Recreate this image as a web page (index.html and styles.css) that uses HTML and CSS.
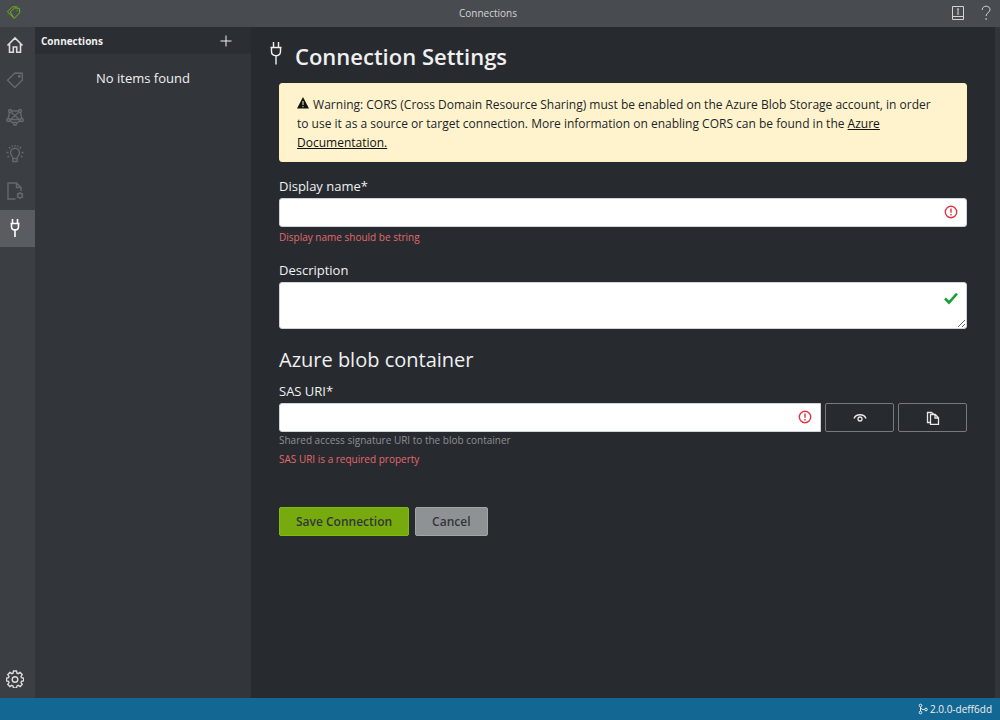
FILE: index.html
```html
<!DOCTYPE html>
<html lang="en">
<head>
    <meta charset="UTF-8">
    <title>Connections</title>
    <link rel="stylesheet" href="styles.css">
</head>
<body>
    <header class="titlebar">
        <svg class="logo" viewBox="0 0 16 16"><path d="M4.500 7.500L9 3.200l5.200.3.500 4.700-5.900 6.100z"/><path d="M8.500 14L1.500 7.300 7 1.800l5 .2"/><circle cx="12" cy="5.800" r=".3"/></svg>
        <h1 class="titlebar-title">Connections</h1>
        <div class="titlebar-tools">
            <button type="button" aria-label="Documentation">
                <svg viewBox="0 0 16 16"><path d="M2.500 1.500h11v13h-11zM2.500 11.500h11M8 4v4.500"/><path d="M7 4h2M7 9h2"/></svg>
            </button>
            <button type="button" aria-label="Help">
                <svg viewBox="0 0 16 16"><path d="M4.200 5C4.200 0 12 0 12 4.700c0 3-3.900 3-3.900 6.300M8.100 13v2"/></svg>
            </button>
        </div>
    </header>

    <div class="app">
        <nav class="sidebar">
            <a class="home" href="#" aria-label="Home">
                <svg viewBox="0 0 18 18"><path d="M1.500 9.500L9 2l7.500 7.500M3.500 8v8.300h3.800v-5.300h3.400v5.300h3.800V8"/></svg>
            </a>
            <a href="#" aria-label="Tags">
                <svg viewBox="0 0 18 18"><path d="M1.500 9.300L9 2l7.200.2.200 6.800-7.600 7.500z"/><circle cx="13.300" cy="5.200" r=".8"/></svg>
            </a>
            <a href="#" aria-label="Train">
                <svg viewBox="0 0 18 18"><path d="M4.500 3h9M3.600 4.300L2 11M14.400 4.300L16 11M3.500 12.700l4.200 2.400M14.500 12.700l-4.200 2.400M4.800 4l8.500 7.300M13.200 4l-8.500 7.300M3.500 11.500h11"/><circle cx="4" cy="3" r="1.500"/><circle cx="14" cy="3" r="1.500"/><circle cx="2.200" cy="12" r="1.500"/><circle cx="15.800" cy="12" r="1.500"/><circle cx="9" cy="15.700" r="1.500"/></svg>
            </a>
            <a href="#" aria-label="Analyze">
                <svg viewBox="0 0 18 18"><path d="M6.800 13c0-2-2.300-2.500-2.300-5.200a4.500 4.500 0 0 1 9 0c0 2.700-2.300 3.200-2.300 5.200v3.500H6.800zM6.800 13.500h4.400M9 0v1.600M3 2l1.300 1.400M15 2l-1.300 1.400M.5 7.500h2M15.500 7.500h2M1.500 12l1.700-.8M16.500 12l-1.700-.8M6 .6l.5 1.300M12 .6l-.5 1.300"/></svg>
            </a>
            <a href="#" aria-label="Project settings">
                <svg viewBox="0 0 18 18"><path d="M9.500 17H2V1h8.500L15 5.500V9M10.500 1v4.500H15"/><circle cx="14" cy="13.500" r="2.300"/><path d="M14 10v1.200M14 15.800V17M10.900 11.700l1.100.7M16 14.600l1.100.7M10.900 15.300l1.100-.7M16 12.400l1.100-.7"/></svg>
            </a>
            <a class="active" href="#" aria-label="Connections">
                <svg viewBox="0 0 18 18"><path d="M6.500 0v4.500M11.500 0v4.500M4.500 4.500h9M5.500 5v2.500C5.500 12 12.500 12 12.500 7.500V5M9 11v7"/></svg>
            </a>
            <a class="settings" href="#" aria-label="Settings">
                <svg viewBox="0 0 18 18"><path d="M7.500 1h3l.5 2.200 1.200.5 1.900-1.200 2.100 2.100-1.200 1.900.5 1.200 2.200.5v2.600l-2.200.6-.5 1.200 1.200 1.900-2.100 2.100-1.900-1.200-1.200.5-.5 2.100h-3L7 15.900l-1.200-.5-1.900 1.200-2.100-2.100L3 12.600l-.5-1.200-2-.6V8.200l2-.5L3 6.500 1.800 4.600l2.100-2.100 1.900 1.200L7 3.200z"/><circle cx="9" cy="9.500" r="2.800"/></svg>
            </a>
        </nav>

        <aside class="panel">
            <div class="panel-header">
                <h2>Connections</h2>
                <button type="button" aria-label="New connection">
                    <svg viewBox="0 0 12 12"><path d="M6 .5v11M.5 6h11"/></svg>
                </button>
            </div>
            <p class="panel-empty">No items found</p>
        </aside>

        <main class="content">
            <h2 class="page-title">
                <svg viewBox="0 0 12 24"><path d="M3.500 1v5M8.500 1v5M.5 6.500h11M1.500 7v3.500c0 5.500 9 5.500 9 0V7M6 15v8.500"/></svg>
                <span>Connection Settings</span>
            </h2>
            <form class="settings-form">
                <div class="alert">
                    <svg viewBox="0 0 12 12"><path d="M6 0l6 11.500H0z"/><path class="mark" d="M6 4v4M6 9v1.200"/></svg>
                    Warning: CORS (Cross Domain Resource Sharing) must be enabled on the Azure Blob Storage account, in order to use it as a source or target connection. More information on enabling CORS can be found in the <a href="#">Azure Documentation.</a>
                </div>

                <div class="field">
                    <label for="name">Display name*</label>
                    <div class="control">
                        <input id="name" type="text">
                        <svg class="state invalid" viewBox="0 0 14 14"><circle cx="7" cy="7" r="5.700"/><path d="M7 3.500v4.300M7 9v1.500"/></svg>
                    </div>
                    <p class="error">Display name should be string</p>
                </div>

                <div class="field">
                    <label for="description">Description</label>
                    <div class="control">
                        <textarea id="description"></textarea>
                        <svg class="state valid" viewBox="0 0 14 14"><path d="M1 7.500L5 11.500l8-8.800"/></svg>
                    </div>
                </div>

                <h3>Azure blob container</h3>
                <div class="field">
                    <label for="sas">SAS URI*</label>
                    <div class="input-row">
                        <div class="control">
                            <input class="joined" id="sas" type="password">
                            <svg class="state invalid" viewBox="0 0 14 14"><circle cx="7" cy="7" r="5.700"/><path d="M7 3.500v4.300M7 9v1.500"/></svg>
                        </div>
                        <button class="btn-outline" type="button" aria-label="Show">
                            <svg viewBox="0 0 14 14"><path d="M1 7.500C3 2.500 11 2.500 13 7.500"/><circle cx="7" cy="8" r="2"/></svg>
                        </button>
                        <button class="btn-outline" type="button" aria-label="Copy">
                            <svg viewBox="0 0 14 14"><path d="M4.500 11.500h-3v-10h4L8 3.500"/><path d="M4.500 3.500h4.700l3.300 3.300v6.700h-8zM9 3.500V7h3.500"/></svg>
                        </button>
                    </div>
                    <p class="help">Shared access signature URI to the blob container</p>
                    <p class="error">SAS URI is a required property</p>
                </div>

                <div class="actions">
                    <button class="btn save" type="submit">Save Connection</button>
                    <button class="btn cancel" type="button">Cancel</button>
                </div>
            </form>
        </main>
    </div>

    <footer class="statusbar">
        <svg viewBox="0 0 12 12"><circle cx="3.500" cy="2.500" r="1.300"/><circle cx="3.500" cy="9.500" r="1.300"/><circle cx="9" cy="6.500" r="1.300"/><path d="M3.500 4v4M3.500 4.500c1 2 2 2 4 2"/></svg>
        <span>2.0.0-deff6dd</span>
    </footer>
</body>
</html>
```
FILE: styles.css
```css
*{
    box-sizing: border-box;
    margin: 0;
    padding: 0;
}
body{
    display: flex;
    flex-direction: column;
    height: 100vh;
    background: #272b30;
    color: #f0f0f0;
    font: 13px/20px "Open Sans", "Noto Sans", sans-serif;
}
svg{
    fill: none;
    stroke: currentColor;
    flex: none;
}
button, input, textarea{
    font: inherit;
}
button{
    cursor: pointer;
}

/* title bar */
.titlebar{
    display: grid;
    grid-template-columns: 1fr auto 1fr;
    align-items: center;
    flex: none;
    height: 27px;
    padding: 0 6px 2px;
    background: #484b50;
    color: #d4d4d4;
}
.titlebar-title{
    font-size: 10px;
    font-weight: 400;
    margin-right: 24px;
}
.logo{
    width: 15px;
    height: 15px;
    color: #70b914;
}
.titlebar-tools{
    display: flex;
    justify-content: flex-end;
    gap: 12px;
}
.titlebar-tools button{
    display: flex;
    border: 0;
    background: none;
    color: #d4d4d4;
}
.titlebar-tools svg{
    width: 16px;
    height: 16px;
}

/* body */
.app{
    display: flex;
    flex: 1;
    min-height: 0;
}
.sidebar{
    display: flex;
    flex-direction: column;
    flex: none;
    width: 35px;
    background: #3b3e42;
}
.sidebar a{
    display: flex;
    align-items: center;
    height: 37px;
    padding: 0 0 2px 6px;
    color: #66696c;
}
.sidebar svg{
    width: 18px;
    height: 18px;
    stroke-width: 1.4;
}
.sidebar .home, .sidebar .settings{
    color: #dcdcdc;
}
.sidebar .home{
    height: 35px;
    padding-bottom: 0;
}
.sidebar .home svg, .sidebar .active svg{
    stroke-width: 1.6;
}
.sidebar .active{
    background: #595c60;
    color: #fff;
}
.sidebar .settings{
    margin-top: auto;
}
.panel{
    flex: none;
    width: 216px;
    background: #32363b;
}
.panel-header{
    display: flex;
    align-items: center;
    justify-content: space-between;
    height: 27px;
    padding: 0 19px 0 6px;
    background: #2b2e33;
}
.panel-header h2{
    font-size: 10px;
    font-weight: 700;
}
.panel-header button{
    display: flex;
    border: 0;
    background: none;
    color: #f0f0f0;
}
.panel-header svg{
    width: 12px;
    height: 12px;
}
.panel-empty{
    padding: 14px 0;
    text-align: center;
}

/* settings */
.content{
    flex: 1;
    min-width: 0;
    padding: 12px 28px 20px 19px;
    border-right: 5px solid #32363b;
    overflow: auto;
}
.page-title{
    display: flex;
    gap: 13px;
    height: 44px;
    font-size: 22px;
    font-weight: 600;
    line-height: 34px;
}
.page-title svg{
    width: 12px;
    height: 24px;
    margin-top: 2px;
    stroke-width: 1.4;
}
.settings-form{
    padding-left: 9px;
}
.alert{
    padding: 11px 22px 9px 17px;
    margin-bottom: 14px;
    border: 1px solid #fff0c0;
    border-radius: 3px;
    background: #fff3cd;
    color: #212529;
    font-size: 12px;
    line-height: 19px;
}
.alert svg{
    width: 12px;
    height: 12px;
    margin-right: 1px;
    fill: #111;
    stroke: none;
}
.alert .mark{
    stroke: #fff3cd;
}
.alert a{
    color: #111;
}
.field{
    margin-bottom: 14px;
}
.field label{
    display: block;
    margin-bottom: 2px;
}
.control{
    position: relative;
    flex: 1;
}
.control input, .control textarea{
    display: block;
    width: 100%;
    height: 29px;
    padding: 4px 30px 4px 10px;
    border: 1px solid #ced4da;
    border-radius: 3px;
    background: #fff;
    color: #272b30;
}
.control textarea{
    height: 47px;
    resize: vertical;
}
.control .joined{
    border-radius: 3px 0 0 3px;
}
/* validation mark lies over the text box */
.state{
    position: absolute;
    top: 7px;
    right: 9px;
    width: 14px;
    height: 14px;
}
.invalid{
    color: #dc3545;
    stroke-width: 1.4;
}
.valid{
    top: 9px;
    color: #18a038;
    stroke-width: 2.6;
}
h3{
    margin-bottom: 4px;
    font-size: 20px;
    font-weight: 400;
    line-height: 34px;
}
.input-row{
    display: flex;
    gap: 4px;
}
.btn-outline{
    display: flex;
    align-items: center;
    justify-content: center;
    width: 69px;
    border: 1px solid #77797c;
    border-radius: 2px;
    background: none;
    color: #e8e8e8;
}
.btn-outline svg{
    width: 14px;
    height: 14px;
    stroke-width: 1.3;
}
.help, .error{
    font-size: 10px;
    line-height: 17px;
}
.help{
    color: #8d9094;
}
.error{
    margin-top: 2px;
    color: #e4686b;
}
.actions{
    display: flex;
    gap: 6px;
    margin-top: 39px;
}
.btn{
    height: 29px;
    padding: 0 16px;
    border: 1px solid;
    border-radius: 2px;
    color: #32363b;
    font-size: 12px;
    font-weight: 600;
}
.save{
    border-color: #7ebd0c;
    background: #77ab0d;
}
.cancel{
    border-color: #a2a5a8;
    background: #8f9295;
}

.statusbar{
    display: flex;
    align-items: center;
    justify-content: flex-end;
    gap: 1px;
    flex: none;
    height: 22px;
    padding: 0 8px;
    background: #136793;
    color: #f0f0f0;
    font-size: 10px;
}
.statusbar svg{
    width: 12px;
    height: 12px;
}
```
